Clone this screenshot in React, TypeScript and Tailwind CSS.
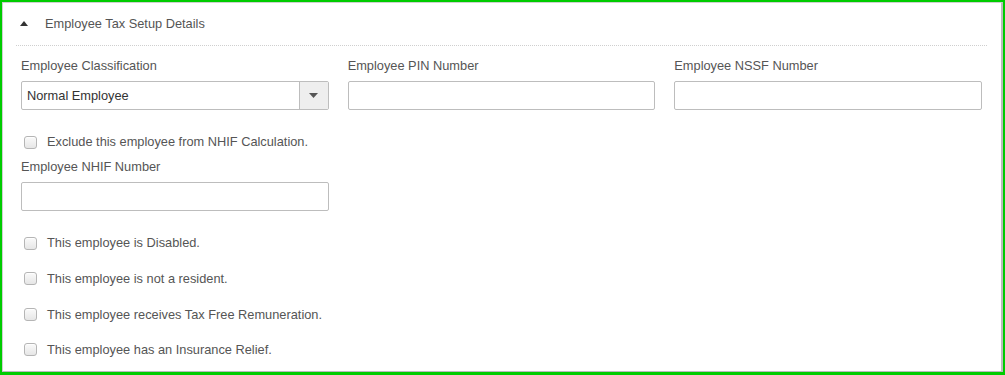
import React from "react";

const font = { fontFamily: '"Liberation Sans", Arial, sans-serif' };

function Check({ label }: { label: string }) {
  return (
    <div className="flex items-center h-[20px]">
      <span className="ml-[3px] w-[13px] h-[13px] rounded-[3px] border border-[#b5b5b5] bg-gradient-to-b from-[#fafafa] to-[#e6e6e6] shadow-[inset_0_1px_1px_rgba(255,255,255,0.8)]" />
      <span className="ml-[10px] text-[12.8px] text-[#555]">{label}</span>
    </div>
  );
}

function Field({ label, children }: { label: string; children?: React.ReactNode }) {
  return (
    <div className="flex flex-col">
      <div className="text-[12.8px] text-[#555] h-[16px] leading-[16px]">{label}</div>
      <div className="mt-[7px]">
        {children ?? (
          <div className="h-[29px] border border-[#bdbdbd] rounded-[2px] bg-white" />
        )}
      </div>
    </div>
  );
}

export default function App() {
  return (
    <div className="w-[1005px] h-[375px] bg-white" style={font}>
      <div className="w-full h-full border-2 border-[#00cc00] border-b-[3px]">
        <div className="w-full h-full border border-[#cfcfcf] border-r-2 border-r-[#bcbcbc] border-b-[#bcbcbc] bg-white">
          <div className="flex items-center h-[42px] pl-[16px]">
            <svg width="8" height="5" viewBox="0 0 8 5" className="ml-[1px] mt-[-1px]">
              <polygon points="0,5 8,5 4,0" fill="#333" />
            </svg>
            <span className="ml-[17px] text-[12.8px] text-[#555]">Employee Tax Setup Details</span>
          </div>
          <div className="ml-[13px] mr-[14px] border-t border-dotted border-[#cfcfcf]" />
          <div className="pl-[18px] pr-[19px] pt-[12px]">
            <div className="grid grid-cols-3 gap-x-[19px]">
              <Field label="Employee Classification">
                <div className="flex h-[29px] border border-[#bdbdbd] rounded-[2px] bg-white">
                  <div className="flex-1 flex items-center pl-[5px] text-[12.8px] text-[#333]">Normal Employee</div>
                  <div className="w-[29px] border-l border-[#bdbdbd] bg-[#eeeeee] flex items-center justify-center">
                    <svg width="9" height="5" viewBox="0 0 9 5">
                      <polygon points="0,0 9,0 4.5,5" fill="#555" />
                    </svg>
                  </div>
                </div>
              </Field>
              <Field label="Employee PIN Number" />
              <Field label="Employee NSSF Number" />
            </div>
            <div className="mt-[22px]">
              <Check label="Exclude this employee from NHIF Calculation." />
            </div>
            <div className="grid grid-cols-3 gap-x-[19px] mt-[7px]">
              <Field label="Employee NHIF Number" />
            </div>
            <div className="flex flex-col gap-[15.6px] mt-[22px]">
              <Check label="This employee is Disabled." />
              <Check label="This employee is not a resident." />
              <Check label="This employee receives Tax Free Remuneration." />
              <Check label="This employee has an Insurance Relief." />
            </div>
          </div>
        </div>
      </div>
    </div>
  );
}
